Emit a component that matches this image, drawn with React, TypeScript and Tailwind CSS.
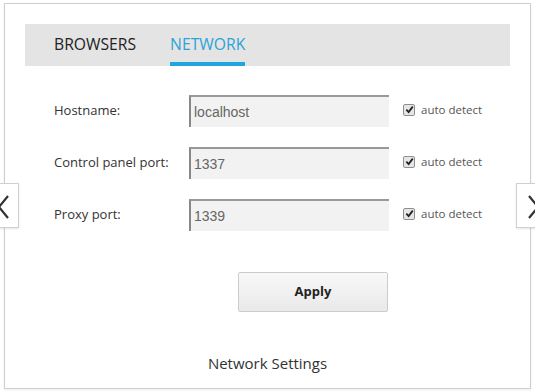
import React from "react"

type Row = {
    id: number;
    label: string;
    value: string;
}

const rows: Row[] = [
    { id: 1, label: "Hostname:", value: "localhost" },
    { id: 2, label: "Control panel port:", value: "1337" },
    { id: 3, label: "Proxy port:", value: "1339" },
]

const CheckBox: React.FC = () => (
    <span className="w-[12px] h-[12px] rounded-[2px] border border-[#8f8f8f] bg-[#e6e6e6] flex items-center justify-center">
        <svg width="9" height="9" viewBox="0 0 10 10">
            <path d="M1.5 5.2 L4 7.8 L8.6 1.8" stroke="#222" strokeWidth="2" fill="none" />
        </svg>
    </span>
)

const App: React.FC = () => {
    return (
        <div className="relative w-[535px] h-[392px] bg-white overflow-hidden" style={{ fontFamily: '"Open Sans", "Noto Sans", sans-serif' }}>
            <div className="ml-[4px] mt-[3px] w-[527px] h-[386px] border border-[#cfcfcf] shadow-[0_1px_2px_rgba(0,0,0,0.08)] flex flex-col">
                <div className="mx-[20px] mt-[20px] h-[42px] bg-[#e4e4e4] flex items-stretch pl-[29px] gap-[34px]">
                    <div className="flex items-center text-[15.7px] text-[#222]">BROWSERS</div>
                    <div className="flex flex-col justify-center text-[15.7px] text-[#2aa3d8] border-b-[4px] border-[#1fa6de] pt-[4px]">
                        NETWORK
                    </div>
                </div>

                <div className="flex flex-col gap-[20px] mt-[29px] pl-[49px]">
                    {rows.map((row) => (
                        <div key={row.id} className="flex items-center h-[32px]">
                            <div className="w-[135px] text-[13px] text-[#333]">{row.label}</div>
                            <div
                                className="w-[200px] h-[32px] bg-[#f2f2f2] border-t-2 border-l-2 border-t-[#999] border-l-[#888] pl-[3px] flex items-center text-[14px] text-[#666]"
                                style={{ fontFamily: '"Liberation Sans", Arial, sans-serif' }}
                            >
                                {row.value}
                            </div>
                            <div className="ml-[14px] flex items-center gap-[6px] -mt-[3px]">
                                <CheckBox />
                                <span className="text-[11.5px] text-[#555]">auto detect</span>
                            </div>
                        </div>
                    ))}
                </div>

                <button className="ml-[233px] mt-[41px] w-[150px] h-[40px] rounded-[2px] border border-[#cccccc] bg-gradient-to-b from-[#f8f8f8] to-[#e9e9e9] text-[13px] font-bold text-[#222]">
                    Apply
                </button>

                <div className="mt-[40px] text-center text-[15px] text-[#333]">Network Settings</div>
            </div>

            <div className="absolute left-[-1px] top-[183px] w-[20px] h-[45px] bg-white border border-[#d0d0d0] shadow-[0_1px_2px_rgba(0,0,0,0.1)] overflow-hidden">
                <svg className="absolute left-0 top-0" width="20" height="45" viewBox="0 0 20 45">
                    <path d="M8 12 L-1 23 L8 34" stroke="#333" strokeWidth="2.2" fill="none" />
                </svg>
            </div>
            <div className="absolute left-[516px] top-[183px] w-[21px] h-[45px] bg-white border border-[#d0d0d0] shadow-[0_1px_2px_rgba(0,0,0,0.1)] overflow-hidden">
                <svg className="absolute left-0 top-0" width="21" height="45" viewBox="0 0 21 45">
                    <path d="M12 12 L21 23 L12 34" stroke="#333" strokeWidth="2.2" fill="none" />
                </svg>
            </div>
        </div>
    )
}

export default App
